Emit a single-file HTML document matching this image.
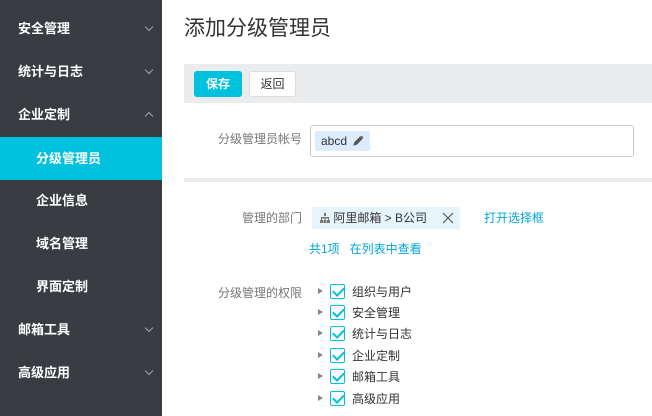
<!DOCTYPE html><html><head><meta charset="utf-8"><style>
*{margin:0;padding:0;box-sizing:border-box}
body{width:652px;height:416px;overflow:hidden;background:#fff;font-family:"Liberation Sans","Noto Sans CJK SC",sans-serif;position:relative}
.sb{position:absolute;left:0;top:0;width:162px;height:416px;background:#393d42}
.it{position:absolute;left:0;width:162px;height:43px;line-height:43px;color:#fff;font-size:13px;font-weight:bold;padding-left:18px}
.it.sub{padding-left:36px}
.it.act{background:#00c1de}
.ar{position:absolute;right:10px;top:17px;width:6px;height:6px;border-right:1px solid #9aa;border-bottom:1px solid #9aa;transform:rotate(45deg)}
.ar.up{top:20px;transform:rotate(-135deg)}
.a{position:absolute;white-space:nowrap}
.lbl{font-size:12px;color:#777;text-align:right;width:120px}
.perm{position:absolute;left:318px;width:200px;font-size:12px;color:#333;height:18px;line-height:18px;white-space:nowrap}
.perm i{position:absolute;left:0;top:5px;border-left:5px solid #888;border-top:3.5px solid transparent;border-bottom:3.5px solid transparent}
.perm b{position:absolute;left:12px;top:1px;width:15px;height:15px;border:1px solid #00c1de;border-radius:2px}
.perm b:after{content:"";position:absolute;left:4px;top:0px;width:5px;height:9px;border-right:2px solid #00c1de;border-bottom:2px solid #00c1de;transform:rotate(45deg)}
.perm span{position:absolute;left:34px;top:0}
</style></head><body>
<div class="sb">
<div class="it" style="top:7px">安全管理<span class="ar"></span></div>
<div class="it" style="top:50px">统计与日志<span class="ar"></span></div>
<div class="it" style="top:93px">企业定制<span class="ar up"></span></div>
<div class="it sub act" style="top:137px">分级管理员</div>
<div class="it sub" style="top:179px">企业信息</div>
<div class="it sub" style="top:222px">域名管理</div>
<div class="it sub" style="top:265px">界面定制</div>
<div class="it" style="top:308px">邮箱工具<span class="ar"></span></div>
<div class="it" style="top:351px">高级应用<span class="ar"></span></div>
</div>
<div class="a" style="left:184px;top:12px;font-size:21px;color:#333">添加分级管理员</div>
<div class="a" style="left:184px;top:64px;width:468px;height:39px;background:#ebeced"></div>
<div class="a" style="left:194px;top:71px;width:48px;height:26px;background:#00c1de;border-radius:3px;color:#fff;font-size:12px;font-weight:bold;text-align:center;line-height:26px">保存</div>
<div class="a" style="left:249px;top:71px;width:47px;height:26px;background:#fff;border:1px solid #ddd;border-radius:3px;color:#333;font-size:12px;text-align:center;line-height:24px">返回</div>
<div class="a lbl" style="left:182px;top:130px">分级管理员帐号</div>
<div class="a" style="left:310px;top:125px;width:324px;height:32px;border:1px solid #ccc;border-radius:3px"></div>
<div class="a" style="left:315px;top:131px;width:55px;height:20px;background:#dcecfc;border-radius:2px;font-size:12px;color:#333;line-height:20px;padding-left:6px">abcd <svg width="11" height="11" viewBox="0 0 12 12" style="vertical-align:-1px;margin-left:3px"><path d="M1 11l1-3 6-6 2 2-6 6z M9 1l2 2" fill="#555" stroke="#555"/></svg></div>
<div class="a" style="left:184px;top:178px;width:468px;height:4px;background:#ebeced"></div>
<div class="a lbl" style="left:182px;top:209px">管理的部门</div>
<div class="a" style="left:312px;top:207px;width:148px;height:22px;background:#e6f5fb;font-size:12px;color:#333;line-height:22px;padding-left:8px"><svg width="10" height="10" viewBox="0 0 10 10" style="vertical-align:-1px"><path d="M4 0h2v3H4zM1 4h8v1.5H1zM1 5h1v2H1zM4.5 5h1v2h-1zM8 5h1v2H8zM0 7h3v3H0zM3.5 7h3v3h-3zM7 7h3v3H7z" fill="#777"/></svg> 阿里邮箱 &gt; B公司<svg width="12" height="12" viewBox="0 0 12 12" style="position:absolute;left:130px;top:5px"><path d="M1 1L11 11M11 1L1 11" stroke="#555" stroke-width="1.2"/></svg></div>
<div class="a" style="left:484px;top:209px;font-size:12px;color:#00a6d6">打开选择框</div>
<div class="a" style="left:309px;top:240px;font-size:12px;color:#00a6d6">共1项&nbsp;&nbsp;&nbsp;在列表中查看</div>
<div class="a lbl" style="left:182px;top:284px">分级管理的权限</div>
<div class="perm" style="top:283px"><i></i><b></b><span>组织与用户</span></div>
<div class="perm" style="top:304px"><i></i><b></b><span>安全管理</span></div>
<div class="perm" style="top:325px"><i></i><b></b><span>统计与日志</span></div>
<div class="perm" style="top:347px"><i></i><b></b><span>企业定制</span></div>
<div class="perm" style="top:368px"><i></i><b></b><span>邮箱工具</span></div>
<div class="perm" style="top:390px"><i></i><b></b><span>高级应用</span></div>
</body></html>
